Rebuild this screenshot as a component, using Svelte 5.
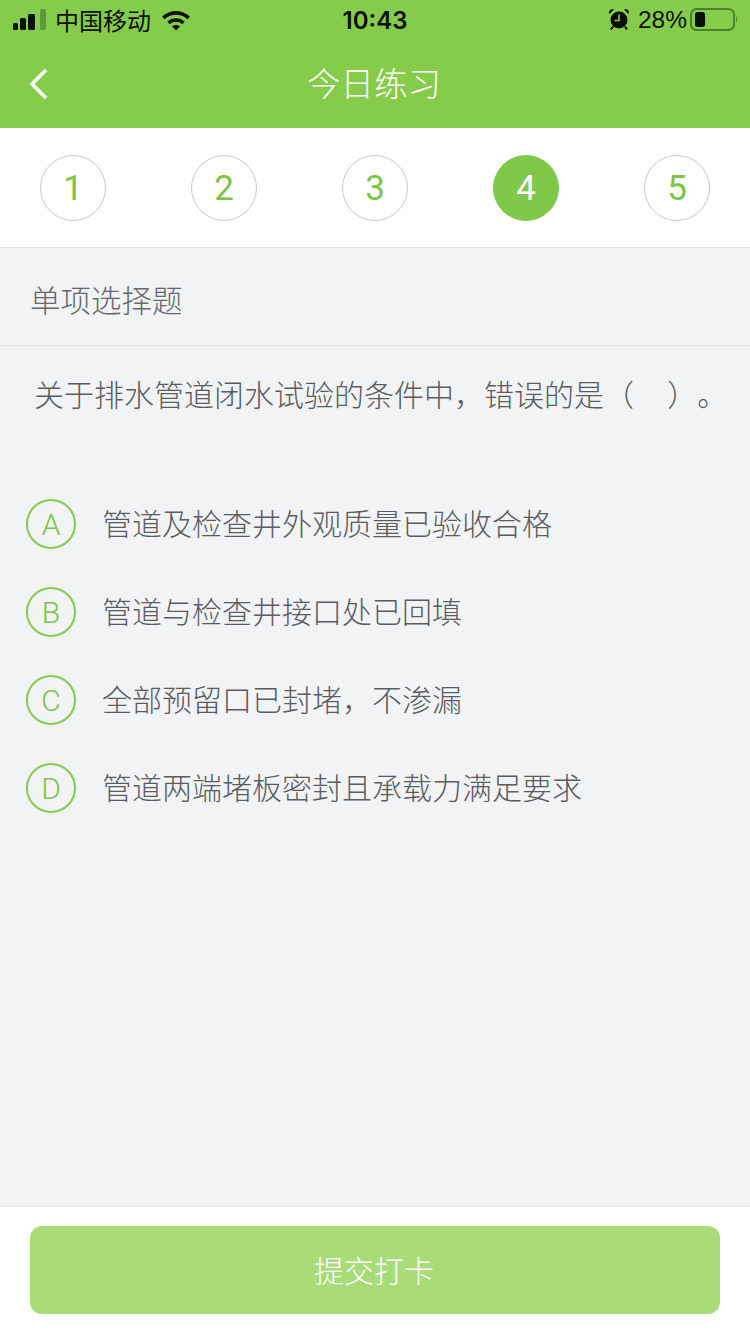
<script lang="ts">
  const steps = [1, 2, 3, 4, 5];
  const current = 4;
  const options = [
    { key: 'A', text: '管道及检查井外观质量已验收合格' },
    { key: 'B', text: '管道与检查井接口处已回填' },
    { key: 'C', text: '全部预留口已封堵，不渗漏' },
    { key: 'D', text: '管道两端堵板密封且承载力满足要求' }
  ];
</script>

<div class="page">
  <header class="head">
    <div class="status">
      <div class="status-left">
        <svg class="signal" width="34" height="22" viewBox="0 0 34 22">
          <rect x="0" y="14" width="5" height="7" rx="1.5" fill="#0a0f05" />
          <rect x="7" y="9" width="6" height="12" rx="1.5" fill="#0a0f05" />
          <rect x="15" y="5" width="7" height="16" rx="1.5" fill="#0a0f05" />
          <rect x="27" y="0" width="6" height="21" rx="1.5" fill="#5c9a3a" />
        </svg>
        <span class="carrier">中国移动</span>
        <svg class="wifi" width="30" height="22" viewBox="0 0 30 22">
          <path d="M1 7.5 C9 0 21 0 29 7.5 L26.4 10.2 C19.8 4.4 10.2 4.4 3.6 10.2 Z" fill="#0a0f05" />
          <path d="M6.2 12.6 C11.4 8 18.6 8 23.8 12.6 L21.2 15.2 C17.4 12 12.6 12 8.8 15.2 Z" fill="#0a0f05" />
          <path d="M11 17.4 C13.4 15.6 16.6 15.6 19 17.4 L15 21.6 Z" fill="#0a0f05" />
        </svg>
      </div>
      <span class="time">10:43</span>
      <div class="status-right">
        <svg class="alarm" width="22" height="22" viewBox="0 0 22 22">
          <circle cx="11" cy="12" r="8.5" fill="#0a0f05" />
          <path d="M1.5 6 C0 3 2.5 0.5 6 1.5 Z M20.5 6 C22 3 19.5 0.5 16 1.5 Z" fill="#0a0f05" />
          <path d="M5 18.5 L3 21.5 M17 18.5 L19 21.5" stroke="#0a0f05" stroke-width="2" />
          <path d="M11 6.5 V12.5 H6.5" stroke="#85cc4b" stroke-width="1.6" fill="none" />
        </svg>
        <span class="percent">28%</span>
        <svg class="battery" width="48" height="24" viewBox="0 0 48 24">
          <rect x="1" y="1" width="43" height="21" rx="5.5" fill="none" stroke="#4d7f2c" stroke-width="2" />
          <rect x="5" y="4" width="10" height="15" rx="2.5" fill="#0a0f05" />
          <path d="M46 8.5 C47.5 9.5 47.5 13.5 46 14.5 Z" fill="#4d7f2c" />
        </svg>
      </div>
    </div>
    <div class="nav">
      <svg class="back" width="20" height="32" viewBox="0 0 20 32">
        <path d="M17 2 L3 16 L17 30" fill="none" stroke="#fff" stroke-width="3.6" />
      </svg>
      <h1>今日练习</h1>
    </div>
  </header>

  <div class="steps">
    {#each steps as n}
      <div class="step" class:on={n === current}>{n}</div>
    {/each}
  </div>

  <main class="body">
    <div class="type">单项选择题</div>
    <p class="question">关于排水管道闭水试验的条件中，错误的是（&nbsp;&nbsp;&nbsp;&nbsp;）。</p>
    <ul class="options">
      {#each options as o}
        <li>
          <span class="key">{o.key}</span>
          <span class="text">{o.text}</span>
        </li>
      {/each}
    </ul>
  </main>

  <footer class="foot">
    <button class="submit">提交打卡</button>
  </footer>
</div>

<style>
  :global(body) {
    margin: 0;
    background: #f2f3f5;
  }
  .page {
    display: flex;
    flex-direction: column;
    height: 1334px;
    font-family: "Liberation Sans", "Noto Sans CJK SC", sans-serif;
    color: #5a5c60;
  }
  .head {
    background: #85cc4b;
    height: 128px;
  }
  .status {
    position: relative;
    height: 40px;
    box-sizing: border-box;
    padding: 0 12px 1px 13px;
    display: flex;
    align-items: center;
    justify-content: space-between;
    color: #0a0f05;
    font-size: 24px;
  }
  .status-left,
  .status-right {
    display: flex;
    align-items: center;
  }
  .signal {
    margin-right: 8px;
  }
  .wifi {
    margin-left: 10px;
  }
  .time {
    position: absolute;
    left: 0;
    right: 0;
    margin-top: 1px;
    text-align: center;
    font-family: Inter, "Liberation Sans", sans-serif;
    font-size: 24px;
    font-weight: 600;
  }
  .alarm {
    margin-bottom: 2px;
  }
  .percent {
    font-family: "Liberation Sans", sans-serif;
    font-size: 24.5px;
    margin: 0 3px 0 8px;
  }
  .nav {
    position: relative;
    height: 88px;
    display: flex;
    align-items: center;
    justify-content: center;
    padding: 0 2px 6px 0;
    box-sizing: border-box;
  }
  .back {
    position: absolute;
    left: 29px;
    top: 28px;
  }
  h1 {
    margin: 0;
    color: #fff;
    font-size: 33.5px;
    font-weight: 300;
  }
  .steps {
    background: #fff;
    border-bottom: 1px solid #e6e6e6;
    display: flex;
    justify-content: space-between;
    align-items: flex-start;
    padding: 27px 40px 0;
    height: 92px;
  }
  .step {
    width: 66px;
    height: 66px;
    box-sizing: border-box;
    border: 1px solid #c8c8c8;
    border-radius: 50%;
    display: flex;
    align-items: center;
    justify-content: center;
    color: #7cc545;
    font-size: 35px;
    font-family: Roboto, "Liberation Sans", sans-serif;
  }
  .step.on {
    background: #7fc84a;
    border-color: #7fc84a;
    color: #fff;
  }
  .body {
    flex: 1;
  }
  .type {
    height: 98px;
    box-sizing: border-box;
    border-bottom: 1px solid #e6e6e8;
    padding: 5px 30px 0;
    display: flex;
    align-items: center;
    font-size: 30.5px;
    color: #66686c;
    font-weight: 300;
  }
  .question {
    margin: 0;
    padding: 30px 0 0 34px;
    font-size: 30px;
    line-height: 40px;
    height: 153px;
    box-sizing: border-box;
    font-weight: 300;
    white-space: nowrap;
    text-spacing-trim: space-all;
  }
  .options {
    list-style: none;
    margin: 0;
    padding: 0 26px;
    display: flex;
    flex-direction: column;
    gap: 38px;
  }
  .options li {
    display: flex;
    align-items: center;
    gap: 26px;
    height: 50px;
    font-size: 30px;
    font-weight: 300;
  }
  .text {
    padding-bottom: 4px;
  }
  .key {
    width: 50px;
    height: 50px;
    flex: none;
    box-sizing: border-box;
    border: 2px solid #86cc4f;
    border-radius: 50%;
    padding-top: 1px;
    display: flex;
    align-items: center;
    justify-content: center;
    color: #7cc545;
    font-size: 30px;
    font-family: Roboto, "Liberation Sans", sans-serif;
  }
  .foot {
    background: #fff;
    height: 128px;
    box-sizing: border-box;
    border-top: 1px solid #e8e8ec;
    padding: 19px 30px 0;
  }
  .submit {
    display: block;
    width: 100%;
    height: 88px;
    border: 0;
    border-radius: 12px;
    background: #a9dc79;
    color: #fff;
    font: inherit;
    font-size: 30px;
    font-weight: 300;
    padding: 0 2px 3px 0;
  }
</style>
